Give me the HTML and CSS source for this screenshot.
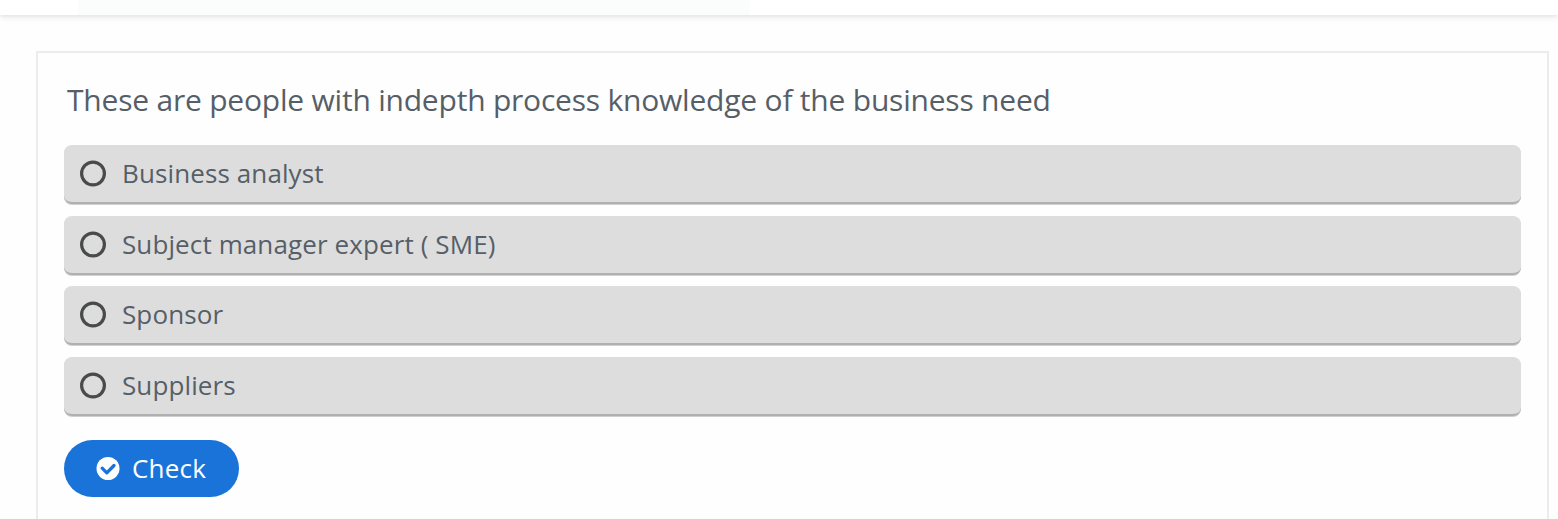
FILE: index.html
```html
<!DOCTYPE html>
<html lang="en">
<head>
<meta charset="utf-8">
<title>Quiz</title>
<link rel="stylesheet" href="styles.css">
</head>
<body>
<header class="topbar"><div class="topbar-section"></div></header>
<main class="card">
  <h1 class="question">These are people with indepth process knowledge of the business need</h1>
  <ul class="answers">
    <li class="answer"><svg class="radio" viewBox="0 0 28 28"><circle cx="14" cy="14.5" r="11.4"/></svg><span>Business analyst</span></li>
    <li class="answer"><svg class="radio" viewBox="0 0 28 28"><circle cx="14" cy="14.5" r="11.4"/></svg><span>Subject manager expert ( SME)</span></li>
    <li class="answer"><svg class="radio" viewBox="0 0 28 28"><circle cx="14" cy="14.5" r="11.4"/></svg><span>Sponsor</span></li>
    <li class="answer"><svg class="radio" viewBox="0 0 28 28"><circle cx="14" cy="14.5" r="11.4"/></svg><span>Suppliers</span></li>
  </ul>
  <button class="check"><svg class="check-icon" viewBox="0 0 24 24"><circle cx="12" cy="12.5" r="11.5"/><path d="M6.2 12.2l4.6 4.6 7.2-7.3"/></svg><span>Check</span></button>
</main>
</body>
</html>
```
FILE: styles.css
```css
* { box-sizing: border-box; }
body { margin: 0; height: 519px; overflow: hidden; display: flex; flex-direction: column; background: #fefefe; color: #565f68; font-family: "Open Sans", sans-serif; }
.topbar { flex: none; height: 15px; padding-left: 78px; background: #fff; box-shadow: 0 3px 6px rgba(0,0,0,.07), 0 2px 2px rgba(0,0,0,.03); }
.topbar-section { width: 672px; height: 15px; background: #fafdfc; }
.card { flex: 1; min-height: 0; margin: 36px 9px 0 36px; padding: 26px 26px 0; border: 2px solid #ececec; border-bottom: 0; }
.question { margin: 0 0 0 3px; height: 66px; font-size: 30px; line-height: 41px; font-weight: 400; letter-spacing: -.21px; white-space: nowrap; }
.answers { list-style: none; margin: 0; padding: 0; display: grid; grid-auto-rows: 59px; row-gap: 11.5px; }
.answer { display: flex; align-items: center; padding: 0 15px .6px; background: #ddd; border-radius: 8px; border-bottom: 2px solid #b0b0b0; box-shadow: 0 1px 0 #d0d0d0; font-size: 26px; line-height: 36px; letter-spacing: .11px; }
.radio { width: 28px; height: 28px; margin-right: 15px; fill: none; stroke: #494a4c; stroke-width: 3.2; }
.check { display: flex; align-items: center; margin-top: 24.5px; width: 175px; height: 57px; padding: 0 32px 1px; border: 0; border-radius: 29px; background: #1a73d9; color: #fff; font: 500 26px "Open Sans", sans-serif; letter-spacing: .2px; }
.check-icon { width: 24px; height: 24px; flex: none; margin-right: 12px; fill: #fff; }
.check-icon path { fill: none; stroke: #1a73d9; stroke-width: 3.3; stroke-linecap: round; stroke-linejoin: round; }
```
